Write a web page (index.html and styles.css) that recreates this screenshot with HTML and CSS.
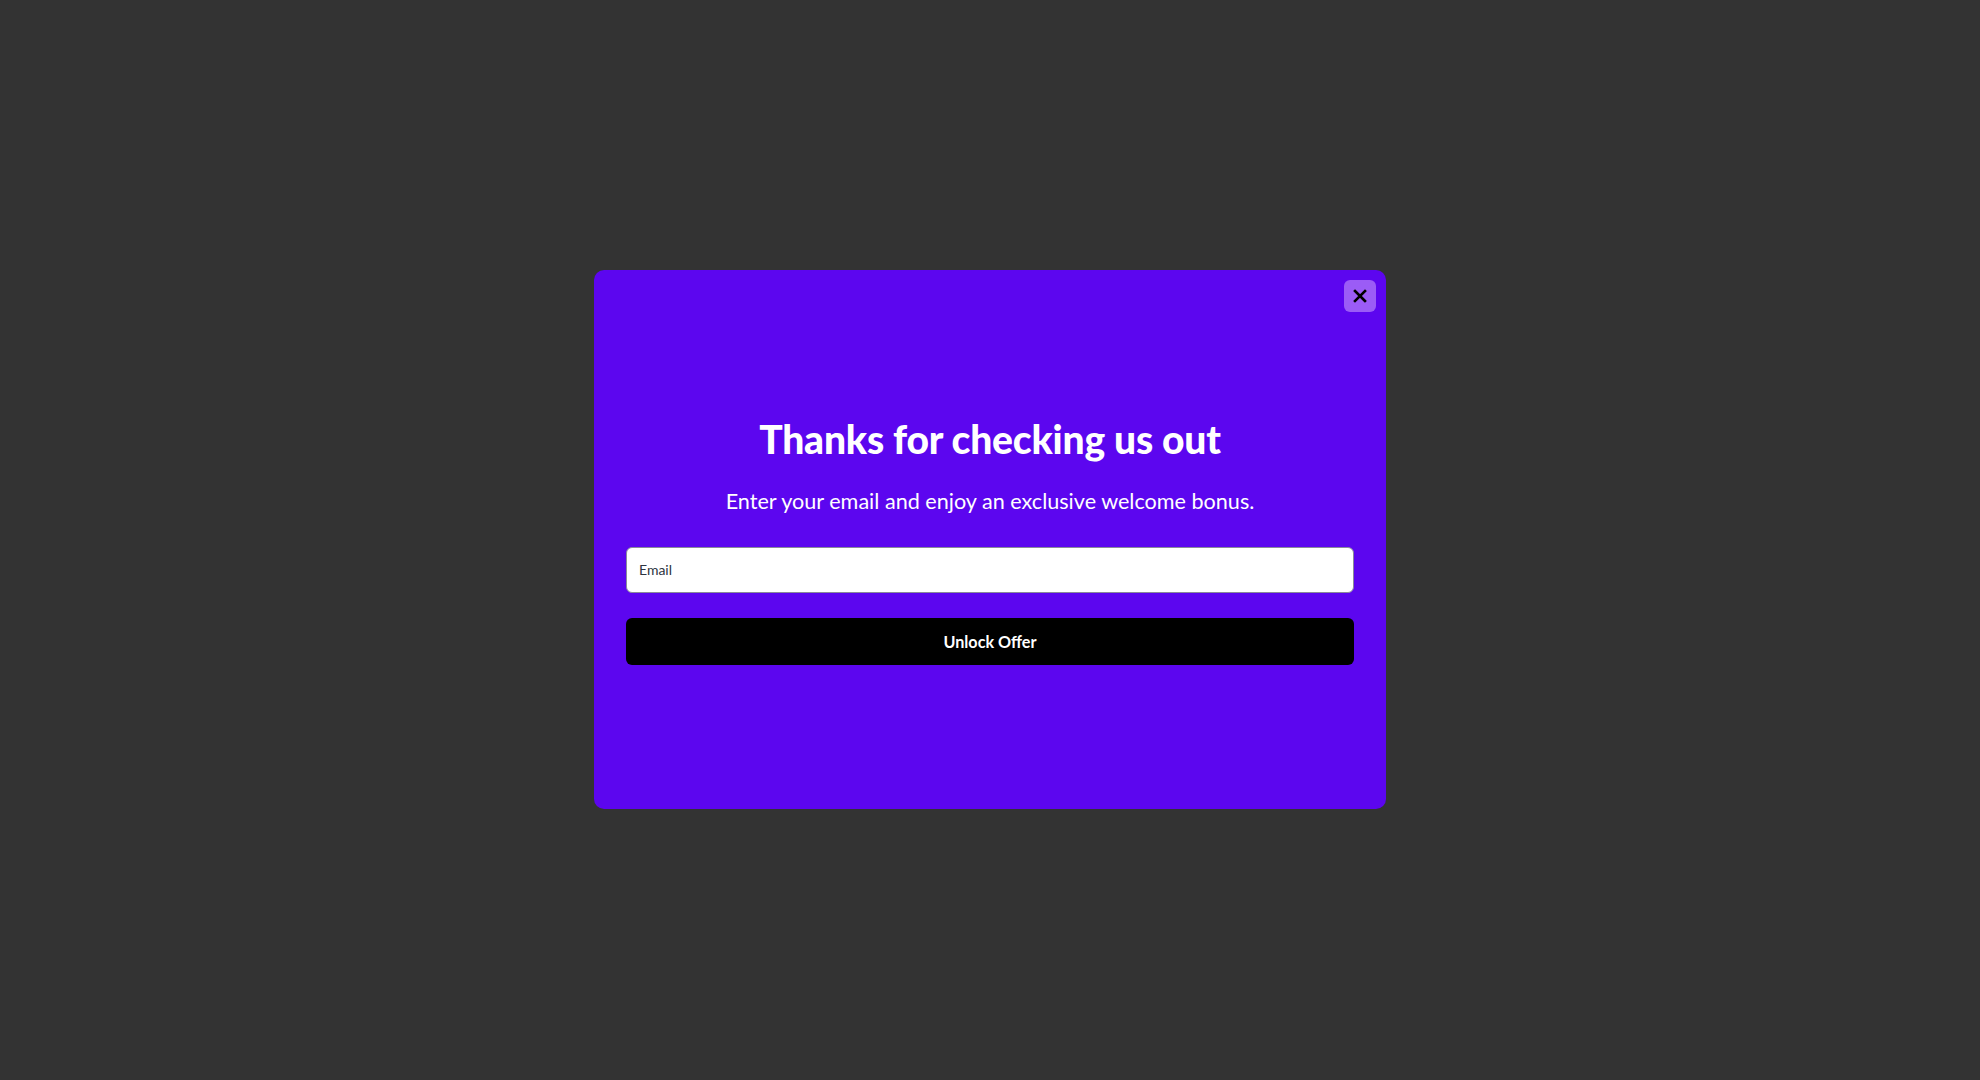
FILE: index.html
```html
<!DOCTYPE html>
<html lang="en">
<head>
  <meta charset="UTF-8" />
  <meta name="viewport" content="width=device-width, initial-scale=1.0"/>
  <title>Welcome Offer</title>
  <link rel="stylesheet" href="styles.css">
</head>
<body>

  <!-- Signup popup over the dimmed page -->
  <div class="overlay">
    <div class="popup">
      <button type="button" class="popup-close" aria-label="Close">
        <svg width="14" height="14" viewBox="0 0 14 14">
          <path d="M2 2 L12 12 M12 2 L2 12" stroke="#000" stroke-width="2.6" stroke-linecap="square"/>
        </svg>
      </button>

      <div class="popup-body">
        <h1>Thanks for checking us out</h1>
        <p class="lead">Enter your email and enjoy an exclusive welcome bonus.</p>

        <form class="signup">
          <input type="email" name="email" placeholder="Email">
          <button type="button" class="unlock">Unlock Offer</button>
        </form>
      </div>
    </div>
  </div>

</body>
</html>
```

FILE: styles.css
```css
body {
  margin: 0;
  padding: 0;
  background-color: #333333;
  font-family: 'Lato', 'Open Sans', sans-serif;
}

.overlay {
  height: 100vh;
  display: flex;
  align-items: center;
  justify-content: center;
}

.popup {
  position: relative;
  width: 792px;
  height: 539px;
  box-sizing: border-box;
  padding: 0 32px;
  background-color: #5c06ef;
  border-radius: 10px;
  display: flex;
  align-items: center;
  margin-top: -1px;
}

.popup-close {
  position: absolute;
  top: 10px;
  right: 10px;
  width: 32px;
  height: 32px;
  border: none;
  border-radius: 6px;
  background-color: #9b5cf6;
  display: flex;
  align-items: center;
  justify-content: center;
  padding: 0;
  cursor: pointer;
}

.popup-body {
  width: 100%;
  text-align: center;
  color: #ffffff;
}

.popup-body h1 {
  margin: 0;
  font-size: 39px;
  font-weight: 900;
  letter-spacing: -0.2px;
  line-height: 48px;
}

.lead {
  margin: 24px 0 0;
  font-size: 21.6px;
  line-height: 28px;
}

.signup {
  margin-top: 32px;
  display: flex;
  flex-direction: column;
  gap: 25px;
}

.signup input {
  height: 46px;
  box-sizing: border-box;
  padding: 0 12px;
  border: 1px solid #8a8a9a;
  border-radius: 6px;
  font-family: 'Lato', sans-serif;
  font-size: 14px;
  color: #2d3440;
  background: #ffffff;
}

.signup input::placeholder {
  color: #2d3440;
}

.unlock {
  height: 47px;
  border: none;
  border-radius: 6px;
  background-color: #000000;
  color: #ffffff;
  font-family: 'Lato', sans-serif;
  font-size: 16.2px;
  font-weight: bold;
  cursor: pointer;
}
```
